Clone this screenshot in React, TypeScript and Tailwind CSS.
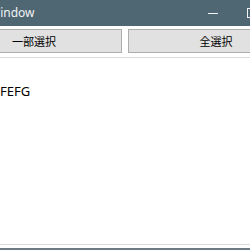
import React from "react";

const ui = { fontFamily: '"Noto Sans", "Noto Sans CJK JP", sans-serif' };

export default function App() {
  return (
    <div
      className="relative flex h-[250px] w-[250px] flex-col overflow-hidden bg-white"
      style={ui}
    >
      {/* title bar */}
      <div className="flex h-[26px] shrink-0 items-center bg-[#4f6673] text-[12px] text-[#f2f4f5]">
        <span className="ml-[-11px] leading-none">Window</span>
        <div className="ml-auto mr-[-7px] flex items-center gap-[29px]">
          <div className="h-px w-[10px] bg-[#f2f4f5]" />
          <div className="h-[10px] w-[10px] border border-[#f2f4f5]" />
        </div>
      </div>

      {/* buttons */}
      <div className="mt-[3px] ml-[-54px] flex shrink-0 gap-[6px]">
        <button className="h-[24px] w-[176px] shrink-0 border border-[#adadad] bg-[#e1e1e1] text-[11px] leading-none text-black">
          一部選択
        </button>
        <button className="h-[24px] w-[176px] shrink-0 border border-[#adadad] bg-[#e1e1e1] text-[11px] leading-none text-black">
          全選択
        </button>
      </div>

      {/* text area */}
      <div className="mx-[-4px] mt-[4px] h-[188px] shrink-0 border-y border-[#d9d9d9]">
        <div className="ml-[4px] mt-[27px] text-[13px] leading-none text-black">
          FEFG
        </div>
      </div>

      <div className="mt-auto h-[2px] shrink-0 bg-[#6b7a83]" />
    </div>
  );
}
